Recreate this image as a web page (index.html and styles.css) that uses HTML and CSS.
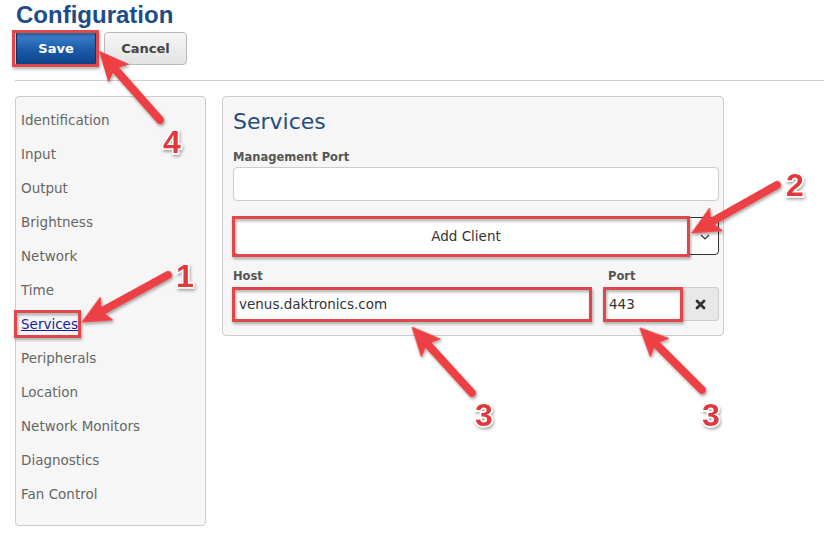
FILE: index.html
```html
<!DOCTYPE html>
<html>
<head>
<meta charset="utf-8">
<title>Configuration</title>
<link rel="stylesheet" href="styles.css">
</head>
<body>
<div class="page">
  <h1 class="title">Configuration</h1>
  <div class="toolbar">
    <button class="btn btn-save">Save</button>
    <button class="btn btn-cancel">Cancel</button>
  </div>
  <div class="rule"></div>
  <div class="content">
    <nav class="sidebar">
      <div class="nav-item">Identification</div>
      <div class="nav-item">Input</div>
      <div class="nav-item">Output</div>
      <div class="nav-item">Brightness</div>
      <div class="nav-item">Network</div>
      <div class="nav-item">Time</div>
      <div class="nav-item"><a class="nav-link" href="#">Services</a></div>
      <div class="nav-item">Peripherals</div>
      <div class="nav-item">Location</div>
      <div class="nav-item">Network Monitors</div>
      <div class="nav-item">Diagnostics</div>
      <div class="nav-item">Fan Control</div>
    </nav>
    <section class="panel">
      <h2 class="panel-title">Services</h2>
      <div class="label">Management Port</div>
      <div class="input"></div>
      <div class="select">
        <span class="select-text">Add Client</span>
        <svg class="chevron" width="10" height="6" viewBox="0 0 10 6"><path d="M1 1 L5 5 L9 1" fill="none" stroke="#333" stroke-width="1.2"/></svg>
      </div>
      <div class="client-row">
        <div class="host-col">
          <div class="label">Host</div>
          <div class="input input-text">venus.daktronics.com</div>
        </div>
        <div class="port-col">
          <div class="label">Port</div>
          <div class="input-group">
            <div class="input input-text input-port">443</div>
            <div class="remove-btn">
              <svg width="11" height="11" viewBox="0 0 11 11"><path d="M2 2 L9 9 M9 2 L2 9" stroke="#333" stroke-width="2.8" stroke-linecap="round"/></svg>
            </div>
          </div>
        </div>
      </div>
    </section>
  </div>
</div>

<svg class="annotations" width="824" height="539" viewBox="0 0 824 539">
  <defs>
    <filter id="sh" x="-20%" y="-20%" width="140%" height="140%">
      <feDropShadow dx="1" dy="2" stdDeviation="1.5" flood-color="#000" flood-opacity="0.35"/>
    </filter>
  </defs>
  <g fill="none" stroke="#e0474c" stroke-width="3" filter="url(#sh)">
    <rect x="13.5" y="31.5" width="84" height="34"/>
    <rect x="15.5" y="311.5" width="64" height="25"/>
    <rect x="233.5" y="217.5" width="455" height="38"/>
    <rect x="233.5" y="288.5" width="357" height="32"/>
    <rect x="604.5" y="288.5" width="77" height="32"/>
  </g>
  <g fill="#ec4044" stroke="#ec4044" filter="url(#sh)">
    <g transform="translate(160,120) rotate(228.6)">
      <line x1="0" y1="0" x2="66" y2="0" stroke-width="8" stroke-linecap="round"/>
      <polygon points="91,0 63,-13 69,0 63,13" stroke-width="1" stroke-linejoin="round"/>
    </g>
    <g transform="translate(168,275) rotate(151.3)">
      <line x1="0" y1="0" x2="73" y2="0" stroke-width="8" stroke-linecap="round"/>
      <polygon points="98,0 70,-13 76,0 70,13" stroke-width="1" stroke-linejoin="round"/>
    </g>
    <g transform="translate(777,185) rotate(150.6)">
      <line x1="0" y1="0" x2="73" y2="0" stroke-width="8" stroke-linecap="round"/>
      <polygon points="98,0 70,-13 76,0 70,13" stroke-width="1" stroke-linejoin="round"/>
    </g>
    <g transform="translate(472,393) rotate(227.7)">
      <line x1="0" y1="0" x2="65" y2="0" stroke-width="8" stroke-linecap="round"/>
      <polygon points="89,0 61,-13 67,0 61,13" stroke-width="1" stroke-linejoin="round"/>
    </g>
    <g transform="translate(702,390) rotate(225)">
      <line x1="0" y1="0" x2="64" y2="0" stroke-width="8" stroke-linecap="round"/>
      <polygon points="88,0 60,-13 66,0 60,13" stroke-width="1" stroke-linejoin="round"/>
    </g>
  </g>
  <g class="num" filter="url(#sh)">
    <text x="163" y="153">4</text>
    <text x="176" y="287">1</text>
    <text x="786" y="196">2</text>
    <text x="475" y="426">3</text>
    <text x="702" y="426">3</text>
  </g>
</svg>
</body>
</html>
```

FILE: styles.css
```css
html, body {
  margin: 0;
  padding: 0;
  background: #ffffff;
}
body {
  position: relative;
  width: 824px;
  height: 539px;
  overflow: hidden;
  font-family: "DejaVu Sans", "Liberation Sans", sans-serif;
  color: #555555;
}
.page {
  padding-left: 15px;
}
.title {
  margin: 1px 0 0 1px;
  font-family: "Liberation Sans", Arial, sans-serif;
  font-weight: bold;
  font-size: 24px;
  line-height: 28px;
  color: #1c4d88;
}
.toolbar {
  display: flex;
  gap: 8px;
  margin: 3px 0 0 1px;
}
.btn {
  height: 33px;
  padding: 0;
  font-family: "DejaVu Sans", sans-serif;
  font-weight: bold;
  font-size: 13px;
  border-radius: 4px;
  cursor: pointer;
}
.btn-save {
  width: 80px;
  color: #ffffff;
  background: linear-gradient(#3f85cf, #1a5ba8 55%, #0d4488);
  border: 1px solid #0b3a78;
  border-radius: 2px;
}
.btn-cancel {
  width: 83px;
  color: #444444;
  background: linear-gradient(#f7f7f7, #e2e2e2);
  border: 1px solid #b9b9b9;
}
.rule {
  height: 1px;
  background: #cfcfcf;
  margin-top: 15px;
}
.content {
  display: flex;
  align-items: flex-start;
  gap: 16px;
  margin-top: 15px;
}
.sidebar {
  box-sizing: border-box;
  width: 191px;
  height: 430px;
  padding: 6px 0 0 5px;
  background: #f6f6f6;
  border: 1px solid #cccccc;
  border-radius: 4px;
}
.nav-item {
  height: 34px;
  line-height: 34px;
  font-size: 13.5px;
  color: #666666;
}
.nav-link {
  color: #1a1aa0;
  text-decoration: underline;
}
.panel {
  box-sizing: border-box;
  width: 502px;
  padding: 10px 4px 14px 10px;
  background: #f6f6f6;
  border: 1px solid #cccccc;
  border-radius: 4px;
}
.panel-title {
  margin: 0;
  font-weight: normal;
  font-size: 22px;
  line-height: 30px;
  color: #1f4e7c;
}
.label {
  font-weight: bold;
  font-size: 11.5px;
  line-height: 16px;
  color: #555555;
}
.panel-title + .label {
  margin-top: 12px;
}
.input {
  box-sizing: border-box;
  height: 34px;
  margin-top: 2px;
  background: #ffffff;
  border: 1px solid #cccccc;
  border-radius: 4px;
}
.input-text {
  padding-left: 5px;
  line-height: 32px;
  font-size: 13.5px;
  color: #333333;
}
.select {
  box-sizing: border-box;
  position: relative;
  height: 38px;
  margin-top: 16px;
  display: flex;
  align-items: center;
  justify-content: center;
  padding-right: 20px;
  background: #ffffff;
  border: 1px solid #333333;
  border-radius: 4px;
  font-size: 13.5px;
  color: #333333;
}
.chevron {
  position: absolute;
  right: 8px;
  top: 16px;
}
.client-row {
  display: flex;
  gap: 13px;
  margin-top: 13px;
}
.host-col {
  width: 357px;
}
.host-col .input {
  margin-top: 3px;
}
.port-col {
  flex: 1;
}
.port-col .label {
  padding-left: 5px;
}
.input-group {
  display: flex;
  margin-top: 3px;
}
.input-group .input {
  margin-top: 0;
}
.input-port {
  width: 80px;
  border-radius: 4px 0 0 4px;
}
.remove-btn {
  box-sizing: border-box;
  flex: 1;
  height: 34px;
  display: flex;
  align-items: center;
  justify-content: center;
  background: #e8e8e8;
  border: 1px solid #cccccc;
  border-left: none;
  border-radius: 0 4px 4px 0;
}
.annotations {
  position: absolute;
  left: 0;
  top: 0;
  pointer-events: none;
}
.num text {
  font-family: "Liberation Sans", Arial, sans-serif;
  font-weight: bold;
  font-size: 32px;
  fill: #e0393e;
  stroke: #ffffff;
  stroke-width: 3px;
  paint-order: stroke;
}
```
